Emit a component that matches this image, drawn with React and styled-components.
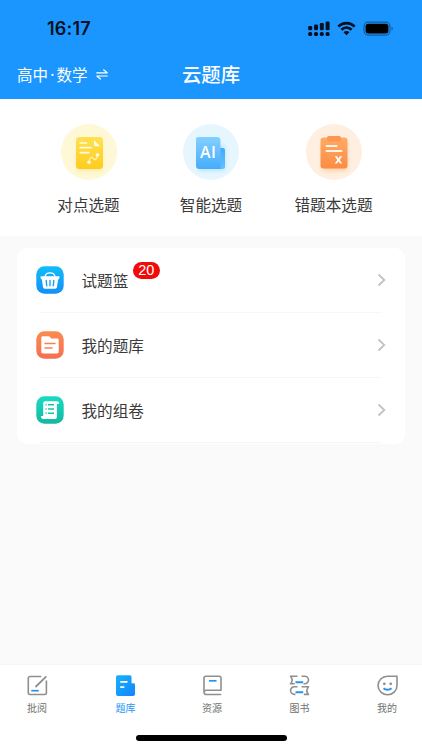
import React from "react";
import styled, { createGlobalStyle } from "styled-components";

const GlobalStyle = createGlobalStyle`
  * {
    box-sizing: border-box;
  }
  body {
    margin: 0;
    background: #fafafa;
    font-family: "Noto Sans CJK SC", "Noto Sans", sans-serif;
    color: #3a3a3a;
  }
  svg {
    display: block;
  }
`;

const Screen = styled.div`
  display: flex;
  flex-direction: column;
  width: 422px;
  height: 750px;
  overflow: hidden;
  background: #fafafa;
`;

const Header = styled.header`
  height: 99px;
  flex-shrink: 0;
  background: #1c96ff;
`;

const StatusBar = styled.div`
  display: flex;
  align-items: center;
  justify-content: space-between;
  height: 51px;
  padding: 6px 28px 0 47px;
`;

const Clock = styled.span`
  font-family: Inter, sans-serif;
  font-size: 18px;
  font-weight: 600;
  letter-spacing: 0.2px;
  line-height: 20px;
  color: #061020;
`;

const NavBar = styled.div`
  display: grid;
  grid-template-columns: 1fr auto 1fr;
  align-items: center;
  height: 46px;
  padding: 0 17px;
  color: #fff;
`;

const Subject = styled.div`
  display: flex;
  align-items: center;
  gap: 8px;
  font-size: 15.5px;
  line-height: 24px;
`;

const Dot = styled.span`
  display: inline-block;
  width: 8.5px;
  text-align: center;
  font-family: "Noto Sans", sans-serif;
`;

const Title = styled.h1`
  margin: 0;
  font-size: 19.4px;
  font-weight: 500;
  line-height: 28px;
`;

const Entries = styled.section`
  display: grid;
  grid-template-columns: repeat(3, 122.5px);
  justify-content: center;
  height: 137px;
  flex-shrink: 0;
  padding-top: 25px;
  background: #fff;
`;

const Entry = styled.div`
  display: flex;
  flex-direction: column;
  align-items: center;
`;

const Circle = styled.div`
  width: 56px;
  height: 56px;
  border-radius: 50%;
  background: ${(props) => props.$color};
`;

const EntryLabel = styled.span`
  margin-top: 12px;
  font-size: 15.6px;
  line-height: 24px;
`;

const Card = styled.section`
  width: 388px;
  margin: 12px 0 0 17px;
  flex-shrink: 0;
  border-radius: 10px;
  background: #fff;
  padding: 0 19px 1px;
`;

const Row = styled.div`
  display: flex;
  align-items: center;
  height: 65px;
  padding-bottom: 2px;
  background: linear-gradient(#f7f7f7, #f7f7f7) 4px 100% / 342px 1.5px no-repeat;
`;

const RowLabel = styled.span`
  margin-left: 17.5px;
  font-size: 15.6px;
  line-height: 24px;
`;

const Badge = styled.span`
  align-self: flex-start;
  margin: 14px 0 0 4.5px;
  width: 27px;
  height: 17px;
  border-radius: 9px;
  background: #f00a0a;
  color: #fff;
  font-family: "Liberation Sans", sans-serif;
  font-size: 14.5px;
  line-height: 17px;
  text-align: center;
`;

const Arrow = styled.div`
  margin-left: auto;
`;

const TabBar = styled.nav`
  display: flex;
  justify-content: space-between;
  height: 70px;
  margin-top: auto;
  flex-shrink: 0;
  padding: 10px 20px 0 22px;
  background: #fff;
  box-shadow: 0 -1px 1px #f5f5f5;
`;

const Tab = styled.div`
  display: flex;
  flex-direction: column;
  align-items: center;
  width: 30px;
  font-size: 10px;
  line-height: 14px;
  color: ${(props) => (props.$active ? "#2397f3" : "#707070")};
  padding-left: ${(props) => (props.$active ? 2 : 0)}px;
`;

const TabLabel = styled.span`
  margin-top: 4.5px;
`;

const HomeArea = styled.div`
  display: flex;
  justify-content: center;
  height: 15px;
  flex-shrink: 0;
  background: #fff;
`;

const HomeIndicator = styled.div`
  width: 151px;
  height: 6px;
  border-radius: 3px;
  background: #000;
`;

const StatusIcons = () => (
  <svg width="86" height="16" viewBox="0 0 86 16" fill="#061020">
    {[0, 1, 2, 3].map((i) => (
      <g key={i}>
        <rect x={0.2 + i * 5.8} y={5 - i * 1.5} width="4" height={4.2 + i * 1.5} rx="1.2" />
        <rect x={0.2 + i * 5.8} y="11.1" width="4" height="4" rx="1.6" />
      </g>
    ))}
    <g transform="translate(29.5 1)" fill="none" stroke="#061020" strokeWidth="2.6">
      <path d="M0.8 4.6C5.4-.1 12.6-.1 17.2 4.6" />
      <path d="M3.9 7.8C6.9 4.9 11.1 4.9 14.1 7.8" />
      <path d="M9 13.2L6 10.2C7.7 8.6 10.3 8.6 12 10.2Z" fill="#061020" stroke="none" />
    </g>
    <rect x="56" y="1.1" width="26" height="13" rx="4" fill="none" stroke="#155b9d" strokeWidth="1.1" />
    <rect x="57.6" y="2.7" width="22.8" height="9.8" rx="2.5" fill="#000" />
    <path d="M83.5 5.600v4c1.800-.6 1.800-3.400 0-4z" fill="#155b9d" />
  </svg>
);

const SwapIcon = () => (
  <svg width="12" height="11" viewBox="0 0 12 11" fill="none" stroke="#fff" strokeWidth="1.2" strokeLinecap="round" strokeLinejoin="round">
    <path d="M.7 3.8h10.500L7.600.8M11.300 7H.8l3.600 3" />
  </svg>
);

const NoteIcon = () => (
  <svg width="56" height="56" viewBox="0 0 56 56">
    <defs>
      <linearGradient id="note" x1="0" y1="0" x2="0" y2="1">
        <stop offset="0" stopColor="#ffe14f" />
        <stop offset="1" stopColor="#ffcb20" />
      </linearGradient>
      <filter id="soft" x="-30%" y="-30%" width="160%" height="160%">
        <feGaussianBlur stdDeviation="2" />
      </filter>
    </defs>
    <rect x="16" y="20" width="25" height="27" rx="3" fill="#ffdc50" opacity=".4" filter="url(#soft)" />
    <rect x="15" y="13" width="27" height="32" rx="3.5" fill="url(#note)" />
    <path d="M33 16l6.200 6.200h-4.700A1.500 1.500 0 0 1 33 20.700z" fill="#fffbe0" />
    <path d="M19.200 19h6.300M19.200 23.700h10.800M19.200 28.600h8.800" stroke="#fffbe0" strokeWidth="1.700" strokeLinecap="round" />
    <path d="M28 37.700c.5-4.400 2.700-5.400 4.300-3.200s3.600 1 4-3.200" fill="none" stroke="#fff7c9" strokeWidth="1.100" />
    <circle cx="28" cy="38.300" r="1.800" fill="#fffbe0" />
    <circle cx="36.500" cy="31" r="1.800" fill="#fffbe0" />
  </svg>
);

const AiIcon = () => (
  <svg width="56" height="56" viewBox="0 0 56 56">
    <defs>
      <linearGradient id="ai" x1="0" y1="0" x2="0" y2="1">
        <stop offset="0" stopColor="#83d0ff" />
        <stop offset="1" stopColor="#45acfc" />
      </linearGradient>
      <linearGradient id="aiBack" x1="0" y1="0" x2="0" y2="1">
        <stop offset="0" stopColor="#42abf8" />
        <stop offset="1" stopColor="#63c1ff" />
      </linearGradient>
    </defs>
    <rect x="16" y="21" width="26" height="26" rx="3" fill="#7cccff" opacity=".4" filter="url(#soft)" />
    <path d="M35 24h5a2 2 0 0 1 2 2v16.500a2.500 2.500 0 0 1-2.500 2.500H33z" fill="url(#aiBack)" />
    <path d="M15 13h19a3.500 3.500 0 0 1 3.500 3.500V45H16.500A3.500 3.500 0 0 1 13 41.500V15a2 2 0 0 1 2-2z" fill="url(#ai)" />
    <text x="25.200" y="33.500" textAnchor="middle" fontFamily="Open Sans, sans-serif" fontSize="16" fontWeight="600" letterSpacing=".4" fill="#fff">AI</text>
  </svg>
);

const ClipboardIcon = () => (
  <svg width="56" height="56" viewBox="0 0 56 56">
    <defs>
      <linearGradient id="clip" x1="0" y1="0" x2="0" y2="1">
        <stop offset="0" stopColor="#ffab66" />
        <stop offset="1" stopColor="#fb8c43" />
      </linearGradient>
    </defs>
    <rect x="16" y="20" width="25" height="27" rx="3" fill="#ffa15b" opacity=".4" filter="url(#soft)" />
    <rect x="14.500" y="13.500" width="27" height="31" rx="3" fill="url(#clip)" />
    <rect x="21" y="12" width="14" height="5.500" rx="2" fill="#ff9550" />
    <path d="M20.500 22h10M20.500 27h15" stroke="#fff3e5" strokeWidth="2" strokeLinecap="round" />
    <path d="M28.800 32.300h2.200l1.500 2.200 1.500-2.200h2.200l-2.500 3.600 2.500 3.600h-2.200l-1.500-2.200-1.500 2.200h-2.200l2.500-3.600z" fill="#fff" />
  </svg>
);

const BasketIcon = () => (
  <svg width="28" height="28" viewBox="0 0 28 28">
    <defs>
      <linearGradient id="basket" x1="0" y1="0" x2="0" y2="1">
        <stop offset="0" stopColor="#12bcf8" />
        <stop offset="1" stopColor="#128ff9" />
      </linearGradient>
    </defs>
    <rect x=".3" y=".3" width="27.400" height="27.400" rx="8" fill="url(#basket)" />
    <path d="M9 11c.5-5.500 9.500-5.500 10 0" fill="none" stroke="#fff" strokeWidth="1.400" />
    <path d="M5.500 10.300h17c.8 0 1.200.5 1 1.200l-.4 1.200c-.2.500-.6.700-1 .7l-1.100 7.700c-.2 1.200-.8 1.700-1.900 1.700H8.900c-1.100 0-1.700-.5-1.900-1.700L5.900 13.400c-.4 0-.8-.2-1-.7l-.4-1.200c-.2-.7.2-1.200 1-1.200z" fill="#fff" />
    <path d="M10.200 14.500l.5 5.200M14 14.500v5.200M17.800 14.500l-.5 5.200" stroke="#16a0f5" strokeWidth="1.400" strokeLinecap="round" />
  </svg>
);

const FolderIcon = () => (
  <svg width="28" height="28" viewBox="0 0 28 28">
    <defs>
      <linearGradient id="folder" x1="0" y1="0" x2="0" y2="1">
        <stop offset="0" stopColor="#fa8d50" />
        <stop offset="1" stopColor="#f76e51" />
      </linearGradient>
    </defs>
    <rect x=".3" y=".3" width="27.400" height="27.400" rx="8" fill="url(#folder)" />
    <path d="M7 5.200h5.600c.7 0 1.100.3 1.500.8l1 1.500h5.900c1.100 0 1.700.6 1.700 1.700v11.600c0 1.100-.6 1.700-1.700 1.700H7c-1.100 0-1.700-.6-1.700-1.700V6.900c0-1.100.6-1.700 1.700-1.700z" fill="#fff" />
    <path d="M9 12.500h10M9 17h7" stroke="#f9814f" strokeWidth="1.400" strokeLinecap="round" />
  </svg>
);

const ScrollIcon = () => (
  <svg width="28" height="28" viewBox="0 0 28 28">
    <defs>
      <linearGradient id="scroll" x1="0" y1="0" x2="0" y2="1">
        <stop offset="0" stopColor="#19dbc3" />
        <stop offset="1" stopColor="#14b8a0" />
      </linearGradient>
    </defs>
    <rect x=".3" y=".3" width="27.400" height="27.400" rx="8" fill="url(#scroll)" />
    <path d="M9.300 5.200h11.800c1.300 0 2 .9 2 2.700h-2.200v12.500c0 1.800-.7 2.700-2 2.700H7.200c-1.500 0-2.200-1-2.200-3h2.200V7.500c0-1.500.7-2.300 2.100-2.300z" fill="#fff" />
    <path d="M12 8.800H18M12 13H18M12 17.200H18M9.500 8.800h1.100M9.500 13h1.100M9.500 17.200h1.100" stroke="#17c4ab" strokeWidth="1.400" />
  </svg>
);

const ChevronIcon = () => (
  <svg width="9" height="14" viewBox="0 0 9 14" fill="none" stroke="#c2c2c2" strokeWidth="1.800">
    <path d="M1.500 1.500L7.300 7 1.500 12.500" />
  </svg>
);

const line = { fill: "none", stroke: "#8f8f8f", strokeWidth: 1.6, strokeLinejoin: "round" };
const accent = { stroke: "#2593ee", strokeWidth: 1.7, fill: "none" };

const ReviewIcon = () => (
  <svg width="21" height="21" viewBox="0 0 21 21">
    <path d="M14.300 1.500H3A1.700 1.700 0 0 0 1.300 3.200v14.600a1.700 1.700 0 0 0 1.700 1.700h14.700a1.700 1.700 0 0 0 1.700-1.700V5.500" {...line} />
    <path d="M8.500 12L19.300 1.300" {...line} strokeWidth="1.800" />
    <path d="M4.300 15.700h7.500" {...accent} />
  </svg>
);

const BankIcon = () => (
  <svg width="21" height="21" viewBox="0 0 21 21">
    <defs>
      <linearGradient id="bank" x1="0" y1="0" x2="1" y2="1">
        <stop offset="0" stopColor="#17b2fc" />
        <stop offset="1" stopColor="#1484ff" />
      </linearGradient>
    </defs>
    <path d="M3 .3h11.500c1.300 0 2 .7 2 2v6h1.800c1.100 0 1.700.6 1.700 1.700v9c0 1.300-.7 2-2 2H3c-1.300 0-2-.7-2-2V2.300c0-1.300.7-2 2-2z" fill="url(#bank)" />
    <path d="M5.300 6.800h7.200M5.300 12.200h4" stroke="#fff" strokeWidth="1.700" />
  </svg>
);

const BookIcon = () => (
  <svg width="21" height="21" viewBox="0 0 21 21">
    <path d="M19.200 19.500H4.200a2.200 2.200 0 0 1-2.200-2.200V3c0-1.200.6-1.800 1.800-1.800h13.400c1.200 0 1.800.6 1.800 1.800v12.300H4.300A2.100 2.100 0 0 0 2 17.400" {...line} />
    <path d="M7 5.800h7.500" {...accent} />
  </svg>
);

const BooksIcon = () => (
  <svg width="21" height="21" viewBox="0 0 21 21">
    <path d="M8.500 1.200H1.500c2 2.300 2 5.300 0 7.600h4.200M12.500 1.200h3.200a3.800 3.800 0 0 1 0 7.600h-1.200" {...line} />
    <path d="M12.500 11.700h7c-2 2.300-2 5.400 0 7.700h-4.700M8.500 11.700H5.400a3.850 3.850 0 0 0 0 7.700h1" {...line} />
    <path d="M6.500 7.300h7.700M6.500 17.300h7.700" {...accent} strokeWidth="1.900" />
  </svg>
);

const MineIcon = () => (
  <svg width="21" height="21" viewBox="0 0 21 21">
    <path d="M10.500 1.200H20v9A9.500 9.300 0 1 1 10.500 1.200z" {...line} />
    <circle cx="7.300" cy="8.800" r="1.400" fill="#8f8f8f" />
    <circle cx="13.700" cy="8.800" r="1.400" fill="#8f8f8f" />
    <path d="M6.500 13.300c2.100 2 5.900 2 8 0" {...accent} strokeWidth="1.900" />
  </svg>
);

const entries = [
  { label: "对点选题", color: "#fff8d6", icon: <NoteIcon /> },
  { label: "智能选题", color: "#e6f6ff", icon: <AiIcon /> },
  { label: "错题本选题", color: "#ffefe0", icon: <ClipboardIcon /> },
];

const rows = [
  { label: "试题篮", icon: <BasketIcon />, badge: 20 },
  { label: "我的题库", icon: <FolderIcon /> },
  { label: "我的组卷", icon: <ScrollIcon /> },
];

const tabs = [
  { label: "批阅", icon: <ReviewIcon /> },
  { label: "题库", icon: <BankIcon />, active: true },
  { label: "资源", icon: <BookIcon /> },
  { label: "图书", icon: <BooksIcon /> },
  { label: "我的", icon: <MineIcon /> },
];

export default function App() {
  return (
    <Screen>
      <GlobalStyle />
      <Header>
        <StatusBar>
          <Clock>16:17</Clock>
          <StatusIcons />
        </StatusBar>
        <NavBar>
          <Subject>
            <span>高中<Dot>·</Dot>数学</span>
            <SwapIcon />
          </Subject>
          <Title>云题库</Title>
        </NavBar>
      </Header>
      <Entries>
        {entries.map((entry) => (
          <Entry key={entry.label}>
            <Circle $color={entry.color}>{entry.icon}</Circle>
            <EntryLabel>{entry.label}</EntryLabel>
          </Entry>
        ))}
      </Entries>
      <Card>
        {rows.map((row) => (
          <Row key={row.label}>
            {row.icon}
            <RowLabel>{row.label}</RowLabel>
            {row.badge && <Badge>{row.badge}</Badge>}
            <Arrow>
              <ChevronIcon />
            </Arrow>
          </Row>
        ))}
      </Card>
      <TabBar>
        {tabs.map((tab) => (
          <Tab key={tab.label} $active={tab.active}>
            {tab.icon}
            <TabLabel>{tab.label}</TabLabel>
          </Tab>
        ))}
      </TabBar>
      <HomeArea>
        <HomeIndicator />
      </HomeArea>
    </Screen>
  );
}
